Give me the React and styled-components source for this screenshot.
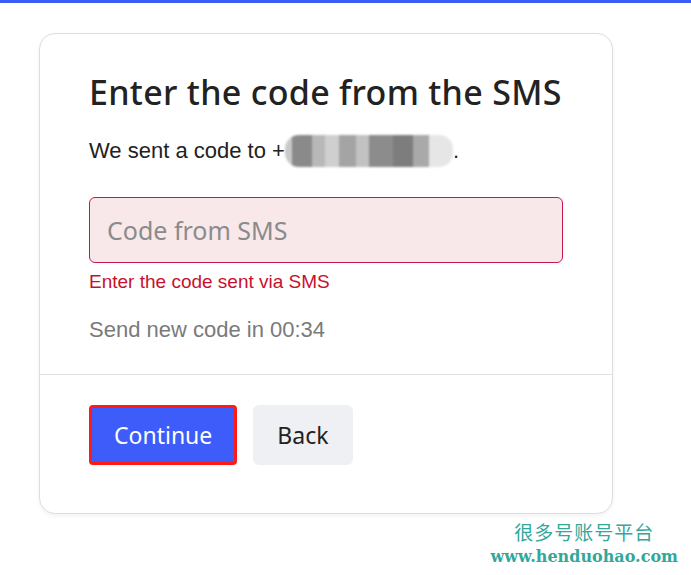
import React, { useState } from 'react';
import styled, { createGlobalStyle } from 'styled-components';

const GlobalStyle = createGlobalStyle`
  html, body {
    margin: 0;
    padding: 0;
    background: #fff;
  }
  body {
    font-family: "Liberation Sans", Arial, sans-serif;
  }
`;

// Styled Components
const TopBar = styled.div`
  height: 3px;
  background-color: #3d5cf5;
`;

const Page = styled.div`
  position: relative;
  height: 572px;
  padding: 30px 0 0 39px;
  box-sizing: border-box;
`;

const Card = styled.div`
  width: 574px;
  box-sizing: border-box;
  border: 1px solid #dedede;
  border-radius: 16px;
  background-color: #fff;
  box-shadow: 0 2px 4px rgba(0, 0, 0, 0.05);
`;

const CardBody = styled.div`
  padding: 36px 49px 29px 49px;
`;

const Title = styled.h1`
  margin: 0;
  font-family: "Noto Sans", "Open Sans", sans-serif;
  font-weight: 500;
  font-size: 34px;
  line-height: 44px;
  color: #222;
  letter-spacing: 0.3px;
`;

const Lead = styled.p`
  display: flex;
  align-items: center;
  margin: 20px 0 0;
  font-size: 22px;
  line-height: 34px;
  color: #222;
`;

const Blurred = styled.span`
  display: inline-block;
  width: 168px;
  height: 32px;
  border-radius: 14px;
  filter: blur(1.2px);
  background: linear-gradient(
    90deg,
    #c9c9c9 0 4%,
    #8a8a8a 4% 16%,
    #b8b8b8 16% 24%,
    #cfcfcf 24% 32%,
    #a4a4a4 32% 42%,
    #c2c2c2 42% 50%,
    #8c8c8c 50% 64%,
    #7d7d7d 64% 76%,
    #a9a9a9 76% 86%,
    #e6e6e6 86% 100%
  );
`;

const Field = styled.input`
  display: block;
  width: 100%;
  height: 66px;
  margin-top: 29px;
  box-sizing: border-box;
  padding: 0 17px;
  border: 1px solid #c8174a;
  border-radius: 6px;
  background-color: #f8e8ea;
  font-family: "Noto Sans", "Open Sans", sans-serif;
  font-size: 25px;
  color: #222;
  outline: none;

  &::placeholder {
    color: #8b8b8b;
  }
`;

const ErrorText = styled.div`
  margin-top: 6px;
  font-size: 19px;
  line-height: 26px;
  color: #c8102e;
`;

const Countdown = styled.div`
  margin-top: 20px;
  font-size: 22px;
  line-height: 30px;
  color: #7a7a7a;
`;

const CardFooter = styled.div`
  display: flex;
  gap: 16px;
  padding: 30px 49px 48px;
  border-top: 1px solid #e3e3e3;
`;

const Button = styled.button`
  height: 60px;
  padding: 0 ${(p) => (p.$primary ? '22px' : '24px')};
  box-sizing: border-box;
  border: ${(p) => (p.$primary ? '3px solid #ff1a1a' : 'none')};
  border-radius: ${(p) => (p.$primary ? '4px' : '6px')};
  background-color: ${(p) => (p.$primary ? '#3d5cf9' : '#eef0f3')};
  color: ${(p) => (p.$primary ? '#fff' : '#222')};
  font-family: "Noto Sans", "Open Sans", sans-serif;
  font-size: 23px;
  cursor: pointer;
`;

const Watermark = styled.div`
  position: absolute;
  right: 13px;
  bottom: 6px;
  display: flex;
  flex-direction: column;
  align-items: center;
  color: #32a79a;
`;

const WatermarkCn = styled.div`
  font-family: "Noto Sans CJK SC", sans-serif;
  font-size: 19px;
  line-height: 26px;
  letter-spacing: 1px;
`;

const WatermarkUrl = styled.div`
  font-family: "DejaVu Serif", "Liberation Serif", serif;
  font-weight: bold;
  font-size: 16px;
  line-height: 24px;
`;

const App = () => {
  const [code, setCode] = useState('');

  return (
    <>
      <GlobalStyle />
      <TopBar />
      <Page>
        <Card>
          <CardBody>
            <Title>Enter the code from the SMS</Title>
            <Lead>
              We sent a code to +<Blurred />.
            </Lead>
            <Field
              placeholder="Code from SMS"
              value={code}
              onChange={(e) => setCode(e.target.value)}
            />
            <ErrorText>Enter the code sent via SMS</ErrorText>
            <Countdown>Send new code in 00:34</Countdown>
          </CardBody>
          <CardFooter>
            <Button $primary>Continue</Button>
            <Button>Back</Button>
          </CardFooter>
        </Card>
        <Watermark>
          <WatermarkCn>很多号账号平台</WatermarkCn>
          <WatermarkUrl>www.henduohao.com</WatermarkUrl>
        </Watermark>
      </Page>
    </>
  );
};

export default App;
